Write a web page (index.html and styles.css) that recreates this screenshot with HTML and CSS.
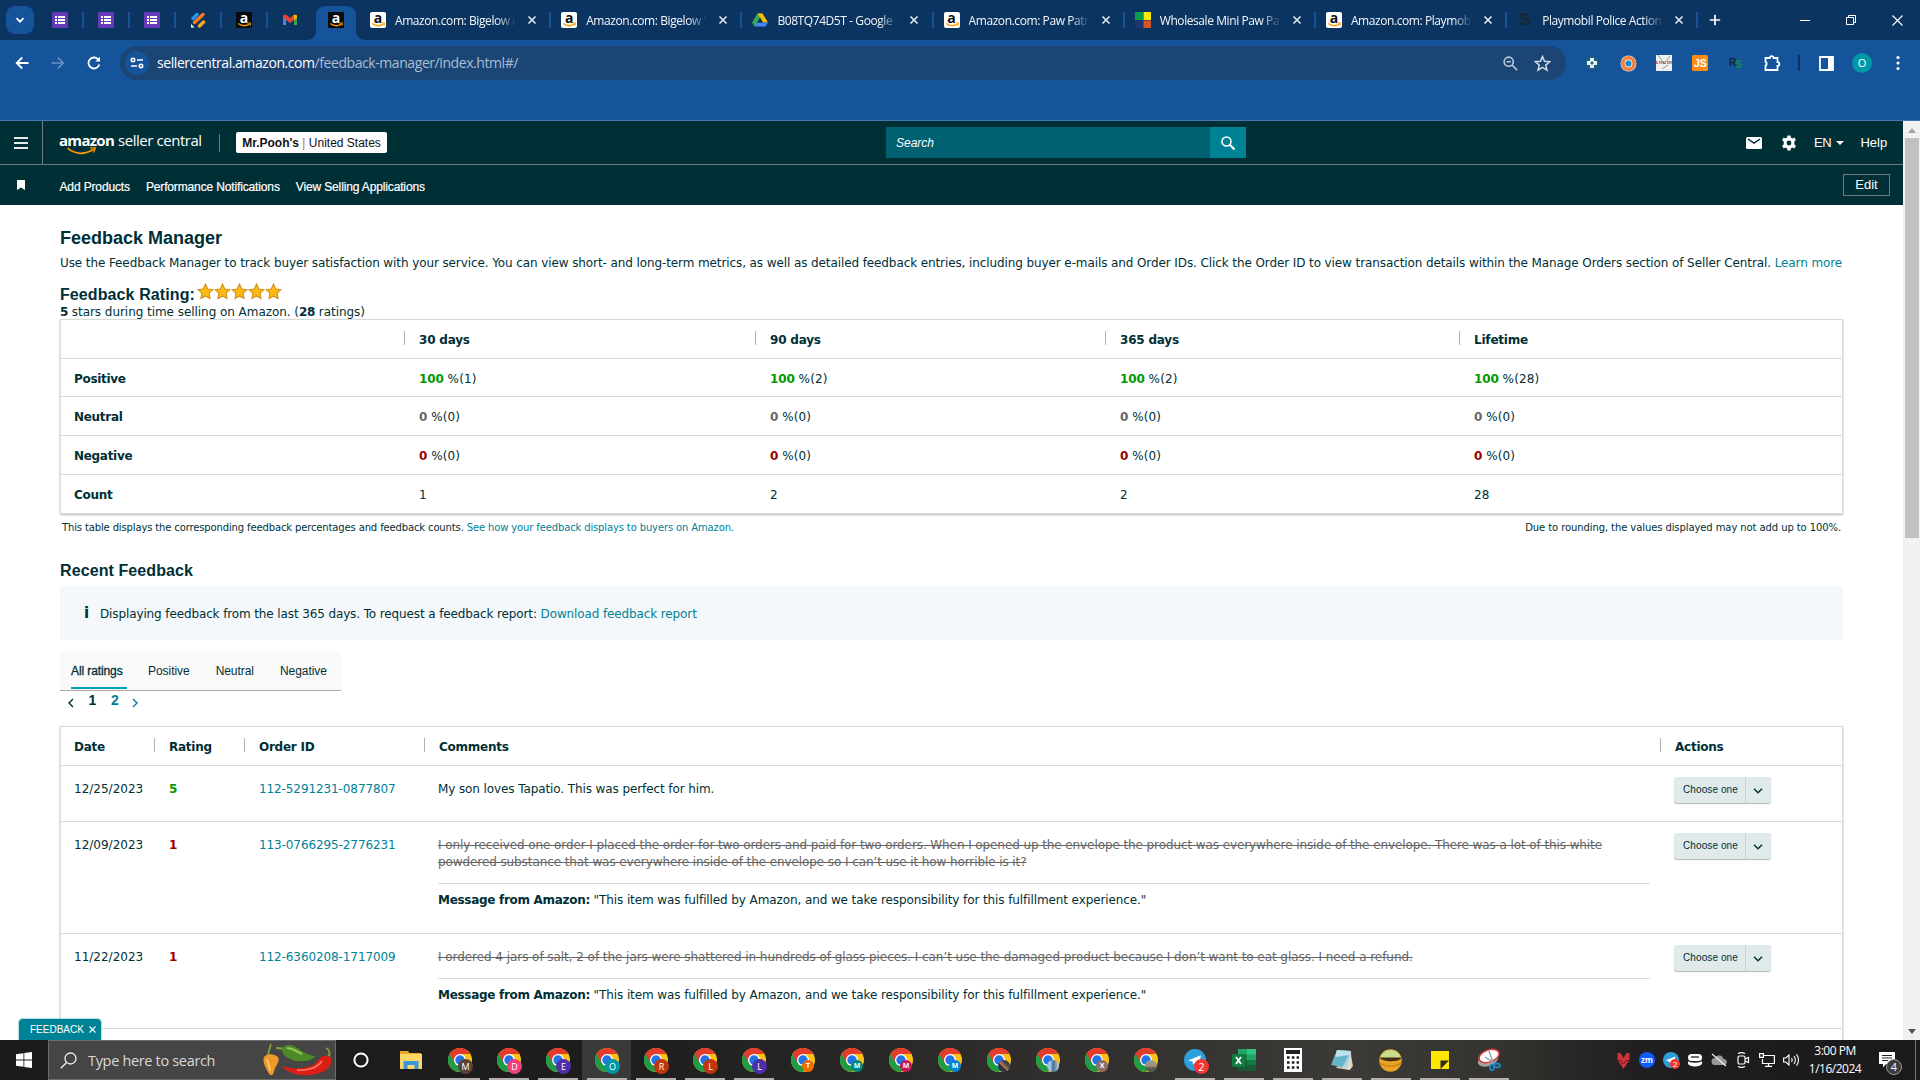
FILE: index.html
```html
<!DOCTYPE html>
<html lang="en">
<head>
<meta charset="utf-8">
<title>Feedback Manager</title>
<link rel="stylesheet" href="styles.css">
</head>
<body>
<svg width="0" height="0" class="defs" aria-hidden="true">
  <symbol id="forms" viewBox="0 0 16 16"><rect width="16" height="16" rx="1.500" fill="#673ab7"/><path d="M3 4h2v2H3zM6 4h7v2H6zM3 7h2v2H3zM6 7h7v2H6zM3 10h2v2H3zM6 10h7v2H6z" fill="#fff"/></symbol>
  <symbol id="smile" viewBox="0 0 16 16"><path d="M2.200 11.600c3.400 2.500 7.800 2.600 11.200.5" fill="none" stroke="#f90" stroke-width="1.300"/><path d="M11.300 11h3v2.600" fill="none" stroke="#f90" stroke-width="1.100"/></symbol>
  <symbol id="drive" viewBox="0 0 16 16"><path d="M5.500 1.500h5L5 11l-2.500 3.500L0 10.500z" fill="#34a853"/><path d="M5.500 1.500h5L16 10.500h-5z" fill="#fbbc04"/><path d="M4.800 10.500H16l-2.500 4h-11z" fill="#4285f4"/><path d="M8 5.800l2.700 4.700H5.300z" fill="#0c3461"/></symbol>
  <symbol id="chrome" viewBox="0 0 24 24"><circle cx="12" cy="12" r="12" fill="#fbc116"/><path d="M12 12L1.600 6A12 12 0 0 0 12 24l5.200-9z" fill="#1e9d46"/><path d="M12 12v-6h10.400A12 12 0 0 0 1.600 6l5.200 9z" fill="#e33b2e"/><circle cx="12" cy="12" r="6" fill="#fff"/><circle cx="12" cy="12" r="4.700" fill="#2573e8"/></symbol>
  <symbol id="close" viewBox="0 0 10 10"><path d="M1.500 1.500l7 7M8.500 1.500l-7 7" stroke="#e3eaf2" stroke-width="1.600"/></symbol>
  <symbol id="star" viewBox="0 0 16 16"><path d="M8 1l2.100 4.600 4.900.6-3.600 3.400.9 5L8 12.200l-4.300 2.400.9-5L1 6.200l4.900-.6z" fill="#fdbb12" stroke="#d38b1c" stroke-width="1"/></symbol>
</svg>

<div class="tabstrip">
  <div class="tab-search"><svg width="10" height="10" viewBox="0 0 10 10"><path d="M1.500 3.200L5 6.700l3.500-3.500" fill="none" stroke="#fff" stroke-width="1.700"/></svg></div>
  <div class="pins">
    <div class="pin"><svg width="16" height="16"><use href="#forms"/></svg></div>
    <div class="pin"><svg width="16" height="16"><use href="#forms"/></svg></div>
    <div class="pin"><svg width="16" height="16"><use href="#forms"/></svg></div>
    <div class="pin"><svg width="16" height="16" viewBox="0 0 16 16" fill="none" stroke-linecap="round" stroke-width="3.400"><path d="M3 6.500l4-4" stroke="#1e9bf0"/><path d="M4.500 10.500l8.500-8" stroke="#ff7a1a"/><path d="M9.500 14l4-4" stroke="#f9a825"/><path d="M1 12v3.500h3.500z" fill="#fff" stroke="none"/></svg></div>
    <div class="pin"><span class="az dark">a<svg width="16" height="16"><use href="#smile"/></svg></span></div>
    <div class="pin last"><svg width="16" height="16" viewBox="0 0 16 16"><path d="M1 4v9h3V7z" fill="#4285f4"/><path d="M15 4v9h-3V7z" fill="#34a853"/><path d="M1 3.500l3-1L8 6l4-3.500 3 1v2.200L8 11 1 5.700z" fill="#ea4335"/><path d="M12 2.500l3 1v2.200L12 8z" fill="#fbbc04"/></svg></div>
  </div>
  <div class="pin-active"><span class="az dark">a<svg width="16" height="16"><use href="#smile"/></svg></span></div>
  <div class="tabs">
    <div class="tab"><span class="az">a<svg width="16" height="16"><use href="#smile"/></svg></span><span class="tt">Amazon.com: Bigelow (</span><svg width="10" height="10"><use href="#close"/></svg></div>
    <div class="tab"><span class="az">a<svg width="16" height="16"><use href="#smile"/></svg></span><span class="tt">Amazon.com: Bigelow '</span><svg width="10" height="10"><use href="#close"/></svg></div>
    <div class="tab"><svg class="fav" width="16" height="16"><use href="#drive"/></svg><span class="tt">B08TQ74D5T - Google</span><svg width="10" height="10"><use href="#close"/></svg></div>
    <div class="tab"><span class="az">a<svg width="16" height="16"><use href="#smile"/></svg></span><span class="tt">Amazon.com: Paw Patr</span><svg width="10" height="10"><use href="#close"/></svg></div>
    <div class="tab"><svg class="fav" width="16" height="16" viewBox="0 0 16 16"><path fill="#0a9a4b" d="M0 0h8v8H0z"/><path fill="#fde80b" d="M8.500 0H16v8H8.500z"/><path fill="#20356f" d="M0 8.500h8V16H0z"/><path fill="#d4552e" d="M8.500 8.500H16V16H8.500z"/></svg><span class="tt">Wholesale Mini Paw Pa</span><svg width="10" height="10"><use href="#close"/></svg></div>
    <div class="tab"><span class="az">a<svg width="16" height="16"><use href="#smile"/></svg></span><span class="tt">Amazon.com: Playmob</span><svg width="10" height="10"><use href="#close"/></svg></div>
    <div class="tab"><span class="fav ess">S</span><span class="tt">Playmobil Police Action</span><svg width="10" height="10"><use href="#close"/></svg></div>
  </div>
  <svg class="plus" width="12" height="12" viewBox="0 0 12 12"><path d="M6 .8v10.400M.8 6h10.400" stroke="#fff" stroke-width="1.700"/></svg>
  <div class="winctl">
    <svg width="10" height="10"><path d="M0 5.500h10" stroke="#fff"/></svg>
    <svg width="10" height="10" viewBox="0 0 10 10"><path d="M.5 2.500h7v7h-7zM2.500 2.500v-2h7v7h-2" fill="none" stroke="#fff"/></svg>
    <svg width="11" height="11" viewBox="0 0 11 11"><path d="M.5.5l10 10M10.500.5l-10 10" stroke="#fff" stroke-width="1.100"/></svg>
  </div>
</div>

<div class="toolbar">
  <div class="navbtns">
    <svg width="14" height="14" viewBox="0 0 14 14" fill="none" stroke="#fff" stroke-width="1.800"><path d="M13.500 7H2M7.200 1.500L1.700 7l5.500 5.500"/></svg>
    <svg width="14" height="14" viewBox="0 0 14 14" fill="none" stroke="#6f94c4" stroke-width="1.600"><path d="M.5 7H12M6.800 1.500L12.300 7l-5.500 5.500"/></svg>
    <svg width="14" height="14" viewBox="0 0 14 14" fill="none" stroke="#fff" stroke-width="1.800"><path d="M12.300 8.500A5.500 5.500 0 1 1 11 3.200L12.500 5"/><path d="M13 .8v4.700H8.300z" fill="#fff" stroke="none"/></svg>
  </div>
  <div class="omnibox">
    <span class="site"><svg width="14" height="12" viewBox="0 0 14 12" fill="none" stroke="#fff" stroke-width="1.600"><circle cx="3" cy="3" r="1.700"/><path d="M7 3h6M1 9h6"/><circle cx="11" cy="9" r="1.700"/></svg></span>
    <span class="url">sellercentral.amazon.com<i>/feedback-manager/index.html#/</i></span>
    <span class="omni-r">
      <svg width="15" height="15" viewBox="0 0 15 15" fill="none" stroke="#bccadb" stroke-width="1.600"><circle cx="5.700" cy="5.700" r="4.600"/><path d="M9.200 9.200l5 5M3.600 5.700h4.200"/></svg>
      <svg width="17" height="17" viewBox="0 0 17 17" fill="none" stroke="#cfdae6" stroke-width="1.500"><path d="M8.500 1.500l2 4.800 5.200.4-4 3.400 1.300 5.100-4.500-2.800L4 15.200l1.300-5.100-4-3.400 5.200-.4z"/></svg>
    </span>
  </div>
  <div class="exts">
    <svg width="14" height="14" viewBox="0 0 14 14"><circle cx="7" cy="7" r="7" fill="#1b6075"/><path d="M5 2h4v3h3v4H9v3H5V9H2V5h3z" fill="#e8f2ff"/><circle cx="7" cy="7" r="1.500" fill="#1b6075"/></svg>
    <svg width="17" height="17" viewBox="0 0 17 17"><circle cx="8.500" cy="8.500" r="8" fill="#fbe4d6"/><circle cx="8.500" cy="8.500" r="5.700" fill="none" stroke="#f08040" stroke-width="3.600"/><circle cx="8.500" cy="8.500" r="3" fill="#168bd2"/></svg>
    <svg width="16" height="16" viewBox="0 0 16 16"><path fill="#eef0f2" d="M0 0h16v16H0z"/><path d="M2 0l6 9 6-8M6 14l6-4" stroke="#999" fill="none"/><text x="8" y="9" text-anchor="middle" font-size="4.500" font-weight="bold" font-family="Liberation Serif" fill="#8c2020">LOG IN</text></svg>
    <svg width="16" height="16" viewBox="0 0 16 16"><rect width="16" height="16" rx="1.500" fill="#ff8a14"/><text x="8.300" y="11.800" text-anchor="middle" font-size="10.500" font-weight="bold" font-family="Liberation Sans" fill="#fff">JS</text></svg>
    <svg width="14" height="14" viewBox="0 0 14 14" font-family="Liberation Sans" font-weight="bold" font-size="10"><text x="0" y="9.500" fill="#17233a">R</text><text x="6.500" y="11.500" fill="#168a50">S</text></svg>
    <svg width="18" height="18" viewBox="0 0 18 18" fill="none" stroke="#fff" stroke-width="1.800"><path d="M2.500 4h4.300a1.900 1.900 0 0 1 3.800 0h3.900v4.200a1.900 1.900 0 0 1 0 3.800v4h-12v-4.500a2 2 0 0 0 0-3.700z"/></svg>
    <span class="extsep"></span>
    <svg width="15" height="15" viewBox="0 0 15 15"><path d="M1 1h13v13H1z" fill="none" stroke="#fff" stroke-width="1.800"/><path d="M9 1h5v13H9z" fill="#fff"/></svg>
    <span class="avatar">O</span>
    <svg width="4" height="16" viewBox="0 0 4 16" fill="#fff"><circle cx="2" cy="2.500" r="1.600"/><circle cx="2" cy="8" r="1.600"/><circle cx="2" cy="13.500" r="1.600"/></svg>
  </div>
</div>

<div class="viewport">
  <div class="page">
    <header class="head">
      <div class="burger"><i></i><i></i><i></i></div>
      <div class="logo"><b>amazon</b><span>seller central</span><svg width="30" height="8" viewBox="0 0 30 8"><path d="M.7 1.200C8 7.600 18 8 26.500 2.300" fill="none" stroke="#f90" stroke-width="1.700"/><path d="M23 .9l5.300-.1-1.700 4.700" fill="none" stroke="#f90" stroke-width="1.300"/></svg></div>
      <div class="store"><b>Mr.Pooh's</b> <em>|</em> United States</div>
      <div class="search"><span class="q">Search</span><span class="go"><svg width="14" height="14" viewBox="0 0 14 14" fill="none" stroke="#fff" stroke-width="1.500"><circle cx="5.500" cy="5.500" r="4.500"/><path d="M8.800 8.800l4.700 4.700" stroke-width="2"/></svg></span></div>
      <div class="tools">
        <svg class="mail" width="16" height="12" viewBox="0 0 16 12"><rect width="16" height="12" rx="1.500" fill="#fff"/><path d="M2 2l6 4.200L14 2" fill="none" stroke="#002f36" stroke-width="1.500"/></svg>
        <svg class="gear" width="16" height="16" viewBox="0 0 16 16"><path d="M6.500.5h3l.4 2.100 1.500.8 2-.8 1.500 2.600-1.600 1.400v2.800l1.600 1.400-1.500 2.600-2-.8-1.500.8-.4 2.100h-3l-.4-2.100-1.500-.8-2 .8L1.100 10.800l1.600-1.400V6.600L1.100 5.200l1.500-2.600 2 .8 1.500-.8z" fill="#fff"/><circle cx="8" cy="8" r="2.400" fill="#002f36"/></svg>
        <span class="lang">EN</span><i class="caret"></i><span>Help</span>
      </div>
    </header>
    <nav class="favs">
      <svg width="8" height="10" viewBox="0 0 8 10"><path d="M0 0h8v10L4 7.500 0 10z" fill="#fff"/></svg>
      <div class="links"><a>Add Products</a><a>Performance Notifications</a><a>View Selling Applications</a></div>
      <span class="edit">Edit</span>
    </nav>

    <main>
      <h1>Feedback Manager</h1>
      <p class="intro">Use the Feedback Manager to track buyer satisfaction with your service. You can view short- and long-term metrics, as well as detailed feedback entries, including buyer e-mails and Order IDs. Click the Order ID to view transaction details within the Manage Orders section of Seller Central. <a>Learn more</a></p>
      <h2 class="rating"><span>Feedback Rating:</span><span class="stars"><svg width="17" height="17"><use href="#star"/></svg><svg width="17" height="17"><use href="#star"/></svg><svg width="17" height="17"><use href="#star"/></svg><svg width="17" height="17"><use href="#star"/></svg><svg width="17" height="17"><use href="#star"/></svg></span></h2>
      <p class="summary"><b>5</b> stars during time selling on Amazon. (<b>28</b> ratings)</p>

      <section class="card metrics">
        <div class="row th"><span></span><span>30 days</span><span>90 days</span><span>365 days</span><span>Lifetime</span></div>
        <div class="row pos"><b>Positive</b><span><b>100</b> %(1)</span><span><b>100</b> %(2)</span><span><b>100</b> %(2)</span><span><b>100</b> %(28)</span></div>
        <div class="row neu"><b>Neutral</b><span><b>0</b> %(0)</span><span><b>0</b> %(0)</span><span><b>0</b> %(0)</span><span><b>0</b> %(0)</span></div>
        <div class="row neg"><b>Negative</b><span><b>0</b> %(0)</span><span><b>0</b> %(0)</span><span><b>0</b> %(0)</span><span><b>0</b> %(0)</span></div>
        <div class="row cnt"><b>Count</b><span>1</span><span>2</span><span>2</span><span>28</span></div>
      </section>
      <div class="foot"><span>This table displays the corresponding feedback percentages and feedback counts. <a>See how your feedback displays to buyers on Amazon.</a></span><span class="rounding">Due to rounding, the values displayed may not add up to 100%.</span></div>

      <h2 class="recent">Recent Feedback</h2>
      <div class="info"><b>i</b><span>Displaying feedback from the last 365 days. To request a feedback report: <a>Download feedback report</a></span></div>
      <div class="filters"><span class="on">All ratings</span><span>Positive</span><span>Neutral</span><span>Negative</span></div>
      <div class="pager"><svg width="6" height="10" viewBox="0 0 6 10"><path d="M5 1L1 5l4 4" fill="none" stroke="#002f36" stroke-width="1.400"/></svg><b>1</b><b class="lk">2</b><svg width="6" height="10" viewBox="0 0 6 10"><path d="M1 1l4 4-4 4" fill="none" stroke="#008296" stroke-width="1.400"/></svg></div>

      <section class="card list">
        <div class="row th"><span>Date</span><span>Rating</span><span>Order ID</span><span>Comments</span><span>Actions</span></div>
        <div class="row r1"><span class="date">12/25/2023</span><span class="good">5</span><span><a>112-5291231-0877807</a></span><div><p>My son loves Tapatio. This was perfect for him.</p></div><span class="choose"><span>Choose one</span><i><svg width="10" height="6" viewBox="0 0 10 6"><path d="M1 .8l4 4 4-4" fill="none" stroke="#002f36" stroke-width="1.500"/></svg></i></span></div>
        <div class="row r2"><span class="date">12/09/2023</span><span class="bad">1</span><span><a>113-0766295-2776231</a></span><div><p><s>I only received one order I placed the order for two orders and paid for two orders. When I opened up the envelope the product was everywhere inside of the envelope. There was a lot of this white<br>powdered substance that was everywhere inside of the envelope so I can’t use it how horrible is it?</s></p><hr><p><b>Message from Amazon:</b> "This item was fulfilled by Amazon, and we take responsibility for this fulfillment experience."</p></div><span class="choose"><span>Choose one</span><i><svg width="10" height="6" viewBox="0 0 10 6"><path d="M1 .8l4 4 4-4" fill="none" stroke="#002f36" stroke-width="1.500"/></svg></i></span></div>
        <div class="row r3"><span class="date">11/22/2023</span><span class="bad">1</span><span><a>112-6360208-1717009</a></span><div><p><s>I ordered 4 jars of salt, 2 of the jars were shattered in hundreds of glass pieces. I can’t use the damaged product because I don’t want to eat glass. I need a refund.</s></p><hr><p><b>Message from Amazon:</b> "This item was fulfilled by Amazon, and we take responsibility for this fulfillment experience."</p></div><span class="choose"><span>Choose one</span><i><svg width="10" height="6" viewBox="0 0 10 6"><path d="M1 .8l4 4 4-4" fill="none" stroke="#002f36" stroke-width="1.500"/></svg></i></span></div>
        <div class="row r4"></div>
      </section>
    </main>
    <div class="fbtab">FEEDBACK<svg width="7" height="7" viewBox="0 0 7 7"><path d="M.5.5l6 6M6.500.5l-6 6" stroke="#fff" stroke-width="1.100"/></svg></div>
  </div>
  <div class="scroll"><i class="up"></i><div class="thumb"></div><i class="down"></i></div>
</div>

<div class="taskbar">
  <div class="start"><svg width="16" height="16" viewBox="0 0 16 16" fill="#fff"><path d="M0 2.200L7.500 1.200v6.400H0zM8.300 1.100L16 0v7.600H8.300zM0 8.400h7.500v6.400L0 13.800zM8.300 8.400H16V16l-7.700-1.100z"/></svg></div>
  <div class="tsearch">
    <svg width="17" height="17" viewBox="0 0 17 17" fill="none" stroke="#f0f0f0" stroke-width="1.300"><circle cx="10.500" cy="6.500" r="5.500"/><path d="M6.500 10.500L.8 16.200"/></svg>
    <span>Type here to search</span>
    <svg class="peppers" width="72" height="34" viewBox="0 0 72 34"><path d="M6 12c1-5 2-8 3-11M14 5c5 0 7 0 9 2M66 14c3-3 1-8-2-9" stroke="#7fa238" stroke-width="1.800" fill="none"/><path d="M1.500 15c2-5 12-5 15 0 1 5-3 7-5 15-1 3-3 3-5 0C4 25 1 21 1.500 15z" fill="#f0992a"/><path d="M5 16c1 4 3 8 3 12" stroke="#ffc66b" stroke-width="2" fill="none"/><path d="M20 5c4-4 10-4 17 1 5 4 12 7 17 7-5 5-13 6-20 5-8-2-15-6-14-13z" fill="#4c8a28"/><path d="M25 5c6 0 10 4 15 6" stroke="#9cc95c" stroke-width="2" fill="none"/><path d="M58 15c3-3 9-3 11 0 2 8-5 14-15 16-12 3-26 1-35-8 10 3 19 3 26 1 7-1 10-5 13-9z" fill="#dc1f16"/><path d="M35 27c10 1 20-2 25-9" stroke="#ff7c60" stroke-width="1.600" fill="none"/></svg>
  </div>
  <div class="apps">
    <div class="app"><svg width="16" height="16" viewBox="0 0 16 16"><circle cx="8" cy="8" r="6.600" fill="none" stroke="#fff" stroke-width="2"/></svg></div>
    <div class="app"><svg width="22" height="18" viewBox="0 0 22 18"><path d="M0 0h8l1.500 2H21v16H0z" fill="#e8a82b"/><path d="M0 3h22v15H0z" fill="#fcd667"/><path d="M3.500 18v-8h15v8h-4v-4h-7v4z" fill="#3b97db"/></svg></div>
    <div class="app run"><svg width="24" height="24"><use href="#chrome"/></svg><i class="bdg brown">M</i></div>
    <div class="app run"><svg width="24" height="24"><use href="#chrome"/></svg><i class="bdg pink">D</i></div>
    <div class="app run"><svg width="24" height="24"><use href="#chrome"/></svg><i class="bdg purple">E</i></div>
    <div class="app run cur"><svg width="24" height="24"><use href="#chrome"/></svg><i class="bdg teal">O</i></div>
    <div class="app run"><svg width="24" height="24"><use href="#chrome"/></svg><i class="bdg rust">R</i></div>
    <div class="app run"><svg width="24" height="24"><use href="#chrome"/></svg><i class="bdg rust">L</i></div>
    <div class="app run"><svg width="24" height="24"><use href="#chrome"/></svg><i class="bdg purple">L</i></div>
    <div class="app"><svg width="24" height="24"><use href="#chrome"/></svg><i class="bdg sm orange">T</i></div>
    <div class="app"><svg width="24" height="24"><use href="#chrome"/></svg><i class="bdg sm green">M</i></div>
    <div class="app"><svg width="24" height="24"><use href="#chrome"/></svg><i class="bdg sm magenta">M</i></div>
    <div class="app"><svg width="24" height="24"><use href="#chrome"/></svg><i class="bdg sm blue">M</i></div>
    <div class="app"><svg width="24" height="24"><use href="#chrome"/></svg><i class="bdg sm pic1"></i></div>
    <div class="app"><svg width="24" height="24"><use href="#chrome"/></svg><i class="bdg sm pic2"></i></div>
    <div class="app"><svg width="24" height="24"><use href="#chrome"/></svg><i class="bdg sm tan">X</i></div>
    <div class="app"><svg width="24" height="24"><use href="#chrome"/></svg><i class="bdg sm pic3"></i></div>
    <div class="app run"><svg width="22" height="22" viewBox="0 0 22 22"><circle cx="11" cy="11" r="11" fill="#2ba0dc"/><path d="M4 11.500l13-5.200-2.400 10.200-3.600-2.700-2 1.900-.4-3.200z" fill="#fff"/></svg><i class="bdg red">2</i></div>
    <div class="app run"><svg width="24" height="22" viewBox="0 0 24 22"><path fill="#21a366" d="M6 0h18v11H6z"/><path fill="#33c481" d="M15 0h9v5.500h-9z"/><path fill="#107c41" d="M6 5.500h9V11H6zM15 11h9v5.500h-9z"/><path fill="#185c37" d="M6 11h9v5h9v6H6z"/><rect y="5" width="13" height="13" rx="1" fill="#107c41"/><path d="M4 8l5 7M9 8l-5 7" stroke="#fff" stroke-width="1.800"/></svg></div>
    <div class="app run"><svg width="18" height="24" viewBox="0 0 18 24"><path d="M0 0h18v24H0z" fill="#fff"/><path d="M2 2h14v4H2z" fill="#222"/><path d="M3 9.500h12M3 14.500h12M3 19.500h12" stroke="#222" stroke-width="2.400" stroke-dasharray="2.600 2.200"/></svg></div>
    <div class="app run"><svg width="24" height="24" viewBox="0 0 24 24"><path d="M20 3l3 15-3 4-14-2z" fill="#c9c4ae"/><path d="M7 2l14 1-4 17L1 17z" fill="#63b4c8"/><path d="M7 2l14 1-1 4L5 9z" fill="#bfe3ea"/><path d="M12 20L21 3l1 15-3 4z" fill="#e7e9e6" opacity=".6"/></svg></div>
    <div class="app run"><svg width="23" height="23" viewBox="0 0 23 23"><circle cx="11.500" cy="11.500" r="11.200" fill="#e9a325"/><path d="M.5 10a11.200 11.200 0 0 1 22 0z" fill="#c9dc8c"/><path d="M.8 8.500h21.400c1 5-20 5-21.400 0z" fill="#4a2c10"/><path d="M1 14c5 4 16 4 21 0" stroke="#c98412" fill="none" stroke-width="1.500"/></svg></div>
    <div class="app run"><svg width="18" height="18" viewBox="0 0 18 18"><path d="M0 0h18v18H0z" fill="#ffe600"/><path d="M9.500 9.500H18L9.500 18z" fill="#2b2a26"/></svg></div>
    <div class="app run"><svg width="24" height="24" viewBox="0 0 24 24"><ellipse cx="11" cy="12" rx="10.500" ry="6" fill="#a3a3a3" transform="rotate(-20 11 12)"/><ellipse cx="12" cy="8" rx="10.500" ry="6" fill="#fff" stroke="#d9383a" stroke-width="1.500" transform="rotate(-20 12 8)"/><path d="M12 3l5 14M8 9l11 7" stroke="#8c9aa5" stroke-width="1.300"/><g fill="none" stroke="#1f86c8" stroke-width="1.800"><ellipse cx="15" cy="19.500" rx="2" ry="2.800"/><ellipse cx="20" cy="17.500" rx="3" ry="2"/></g></svg></div>
  </div>
  <div class="tray">
    <div class="icons">
      <svg width="13" height="17" viewBox="0 0 13 17"><path d="M.5 1h3l3 5 3-5h3v7l-6 9-6-9z" fill="#cf3238"/><path d="M1 8.500h2.500l3 3.500 3-3.500H12" fill="none" stroke="#5d1a20" stroke-width="1"/></svg>
      <span class="zm">zm</span>
      <span class="tg"><svg width="16" height="16" viewBox="0 0 22 22"><circle cx="11" cy="11" r="11" fill="#2ba0dc"/><path d="M4 11.500l13-5.200-2.400 10.200z" fill="#fff"/></svg><i>2</i></span>
      <svg width="14" height="13" viewBox="0 0 14 13"><rect y="0" width="14" height="7" rx="3.500" fill="#fff"/><path d="M3 3h8" stroke="#222" stroke-width="1.300"/><path d="M0 7c1 2.300 13 2.300 14 0v2.500c-1 4-13 4-14 0z" fill="#fff"/></svg>
      <svg width="16" height="14" viewBox="0 0 16 14"><path d="M4 12a3.500 3.500 0 0 1 0-7 4.500 4.500 0 0 1 8.500 1A3 3 0 0 1 13 12z" fill="#999"/><path d="M1 1l14 12" stroke="#eee" stroke-width="1.300"/></svg>
      <svg width="14" height="16" viewBox="0 0 14 16" fill="none" stroke="#fff" stroke-width="1.200"><rect x="2" y="4" width="7" height="8" rx="1.500"/><path d="M9 7l3.500-1.500v5L9 9M2 1.500c2-1 5-1 7 0M2 14.500c2 1 5 1 7 0"/></svg>
      <svg width="16" height="14" viewBox="0 0 16 14" fill="none" stroke="#fff" stroke-width="1.200"><path d="M5 2.500h10.400v8H3.500V6M9.500 10.500v3M6 13.400h7M.6.600h3.800v3.800H.6z"/></svg>
      <svg width="17" height="14" viewBox="0 0 17 14" fill="none" stroke="#fff" stroke-width="1.100"><path d="M.6 5h2.200L6 2v10L2.800 9H.6zM8.500 5c.8 1.200.8 2.800 0 4M11 3c1.600 2.400 1.600 5.600 0 8M13.500 1.200c2.500 3.600 2.500 8 0 11.600"/></svg>
    </div>
    <div class="clock"><span>3:00 PM</span><span>1/16/2024</span></div>
    <div class="note"><svg width="16" height="16" viewBox="0 0 16 16"><path d="M0 0h16v12H7l-3 3.500V12H0z" fill="#fff"/><path d="M3 3.500h10M3 6h10M3 8.500h6" stroke="#222"/></svg><i>4</i></div>
  </div>
</div>
</body>
</html>
```
FILE: styles.css
```css
* { box-sizing: border-box; }
body { margin: 0; width: 1920px; height: 1080px; overflow: hidden; display: flex; flex-direction: column; background: #fff; color: #002f36; font: 12px "DejaVu Sans", sans-serif; }
svg { display: block; flex: none; }
p, h1, h2 { margin: 0; }
i, em { font-style: normal; }
.defs { position: absolute; }

/* browser tab strip */
.tabstrip { flex: none; height: 40px; background: #0c3461; display: flex; align-items: center; padding-left: 6px; font: 12px/16px "Open Sans", sans-serif; color: #f2f6fa; }
.tab-search { width: 28px; height: 28px; border-radius: 9px; background: #15539a; display: flex; align-items: center; justify-content: center; }
.pins { display: flex; margin-left: 3px; }
.pin { width: 46px; display: flex; justify-content: center; height: 16px; position: relative; }
.pin::after { content: ""; position: absolute; right: -1px; width: 2px; height: 16px; background: #15539a; }
.pin.last::after { display: none; }
.pin-active { width: 40px; height: 34px; align-self: flex-end; margin-left: 3px; border-radius: 9px 9px 0 0; background: #15539a; display: flex; align-items: center; justify-content: center; padding-bottom: 6px; position: relative; }
.pin-active::before, .pin-active::after { content: ""; position: absolute; bottom: 0; width: 8px; height: 8px; }
.pin-active::before { left: -8px; background: radial-gradient(circle at 0 0, transparent 7.500px, #15539a 8px); }
.pin-active::after { right: -8px; background: radial-gradient(circle at 100% 0, transparent 7.500px, #15539a 8px); }
.az { position: relative; width: 16px; height: 16px; border-radius: 2px; background: #fff; color: #111; font: bold 14px/12px "Open Sans", sans-serif; text-align: center; flex: none; }
.az svg { position: absolute; left: 0; top: 0; }
.az.dark { background: #0a0a0a; color: #fff; border-radius: 0; }
.tabs { display: flex; margin-left: 4px; }
.tab { width: 191.200px; height: 16px; display: flex; align-items: center; padding-left: 10px; border-right: 2px solid #15539a; }
.tt { margin-left: 9px; width: 119px; white-space: nowrap; overflow: hidden; line-height: 18px; padding-top: 1px; letter-spacing: -.42px; -webkit-mask-image: linear-gradient(90deg, #000 102px, transparent 121px); mask-image: linear-gradient(90deg, #000 102px, transparent 121px); }
.tab > svg:last-child { margin-left: 13px; }
.ess { width: 16px; font: bold 17px/16px "Liberation Sans", sans-serif; color: #1b2430; text-align: center; }
.plus { margin-left: 11px; }
.winctl { margin-left: auto; padding-right: 17px; display: flex; gap: 36px; align-items: center; }

/* browser toolbar */
.toolbar { flex: none; height: 81px; background: #15539a; border-bottom: 1px solid #4478b0; display: flex; align-items: flex-start; padding-top: 6px; }
.navbtns { display: flex; gap: 22px; padding: 10px 0 0 15px; width: 120px; }
.omnibox { width: 1446px; height: 34px; border-radius: 17px; background: #1a4574; display: flex; align-items: center; padding-left: 5px; }
.site { width: 24px; height: 24px; border-radius: 12px; background: #15539a; display: flex; align-items: center; justify-content: center; }
.url { margin-left: 8px; font: 14px/20px "Open Sans", sans-serif; letter-spacing: -.43px; color: #fff; white-space: nowrap; }
.url i { color: #a9bdd4; }
.omni-r { margin-left: auto; padding-right: 15px; display: flex; gap: 16px; align-items: center; }
.exts { display: grid; grid-template-columns: repeat(6, 36px) 18px repeat(3, 36px); margin-left: 8px; height: 34px; align-items: center; justify-items: center; }
.extsep { width: 2px; height: 16px; background: #0c3461; }
.avatar { width: 20px; height: 20px; border-radius: 10px; background: #0097a7; color: #fff; font: 11px/20px "Open Sans", sans-serif; text-align: center; }

/* page frame */
.viewport { flex: none; height: 919px; display: flex; }
.page { width: 1903px; height: 919px; overflow: hidden; position: relative; }
.scroll { width: 17px; background: #f1f1f1; display: flex; flex-direction: column; align-items: center; }
.up, .down { border: 4px solid transparent; width: 0; height: 0; }
.up { border-bottom: 5px solid #a3a3a3; border-top: 0; margin-top: 7px; }
.down { border-top: 5px solid #505050; border-bottom: 0; margin: auto 0 6px; }
.thumb { width: 14px; height: 400px; background: #c1c1c1; margin-top: 5px; }

/* seller central header */
.head { height: 44px; background: #002f36; border-bottom: 1px solid #6b7b7e; display: flex; align-items: center; color: #fff; font: 13px/18px "Liberation Sans", sans-serif; }
.burger { width: 43px; height: 43px; border-right: 1px solid #6b7b7e; display: flex; flex-direction: column; gap: 3px; justify-content: center; padding-left: 14px; }
.burger i { width: 14px; height: 2px; background: #e6eaea; }
.logo { position: relative; width: 177px; height: 18px; padding-left: 16px; border-right: 1px solid #6b7b7e; font: 15px/16px "Open Sans", sans-serif; white-space: nowrap; display: flex; gap: 4px; }
.logo > * { display: block; margin-top: -2px; }
.logo b { letter-spacing: -.7px; width: 55px; }
.logo span { letter-spacing: -.45px; }
.logo svg { position: absolute; left: 24px; top: 13px; margin: 0; }
.store { width: 151px; height: 21px; margin-left: 16px; background: #fff; border-radius: 2px; color: #111; font-size: 12px; line-height: 22px; text-align: center; white-space: nowrap; }
.store em { color: #b5742a; }
.search { margin-left: 499px; width: 360px; height: 31px; display: flex; }
.q { width: 324px; background: #006170; padding-left: 10px; font-style: italic; font-size: 12px; line-height: 32px; }
.go { width: 36px; background: #008296; display: flex; align-items: center; justify-content: center; }
.tools { margin-left: 500px; display: flex; align-items: center; }
.gear { margin-left: 19px; }
.lang { margin-left: 17px; letter-spacing: -.3px; }
.caret { border: 4px solid transparent; border-top-color: #fff; border-bottom: 0; margin: 1px 16px 0 5px; }
.favs { height: 40px; background: #002f36; display: flex; align-items: center; padding-left: 17px; color: #fff; font: 12px/16px "Liberation Sans", sans-serif; }
.links { display: flex; gap: 16px; margin: 4px 0 0 34.500px; white-space: nowrap; letter-spacing: -.14px; -webkit-text-stroke: .2px #fff; }
.edit { margin: 0 13px 0 auto; width: 47px; height: 22px; border: 1px solid #6b7b7e; text-align: center; line-height: 20px; font-size: 13px; }

/* feedback manager */
main { padding: 21px 0 0 60px; width: 1843px; letter-spacing: -.1px; }
main a { color: #008296; }
main b { letter-spacing: -.3px; }
h1 { font: bold 18px/24px "Liberation Sans", sans-serif; letter-spacing: 0; }
h2 { font: bold 16px/20px "Liberation Sans", sans-serif; letter-spacing: .1px; }
.intro { margin-top: 4px; line-height: 18px; white-space: nowrap; }
.rating { margin-top: 12px; display: flex; }
.rating > span:first-child { padding-top: 1px; height: 20px; }
.stars { display: flex; margin: -1px 0 0 2px; }
.summary { height: 15px; line-height: 17px; letter-spacing: -.05px; }
.card { border: 1px solid #d5dbdb; box-shadow: 0 1px 2px #bbb; }
.row { display: grid; border-bottom: 1px solid #d5dbdb; }
.metrics .row { grid-template-columns: 343px 351px 350px 354px 1fr; height: 39px; line-height: 40px; letter-spacing: .15px; }
.metrics .row.th { letter-spacing: -.2px; }
.metrics .row.pos { height: 38px; }
.metrics .row:last-child { height: 38px; border: 0; }
.metrics span b { letter-spacing: -.15px; }
.row > * { padding-left: 15px; }
.row > :first-child { padding-left: 13px; }
.th { font-weight: bold; letter-spacing: -.25px; }
.th > span { position: relative; }
.th > span + span::before { content: ""; position: absolute; left: 0; top: 11px; width: 1px; height: 14px; background: #aab7b8; }
.pos span b { color: #090; }
.neu span b { color: #666; }
.neg span b { color: #900; }
.foot { margin-top: 7px; padding: 0 2px; display: flex; justify-content: space-between; font-size: 10px; line-height: 14px; letter-spacing: -.135px; white-space: nowrap; }
.rounding { letter-spacing: -.09px; }
.recent { margin-top: 26px; }
.info { margin-top: 5px; height: 54px; background: #f4f8fa; display: flex; align-items: center; white-space: nowrap; letter-spacing: -.12px; }
.info span { padding-top: 2px; }
.info b { width: 40px; padding-left: 24px; font-size: 15px; }
.filters { margin-top: 12px; width: 281px; height: 39px; background: #fafafa; border-bottom: 1px solid #aaa; display: flex; padding-left: 11px; font: 12px/38px "Liberation Sans", sans-serif; letter-spacing: -.05px; white-space: nowrap; }
.filters > span { flex: none; margin-right: 26px; }
.filters .on { width: 56px; margin-right: 21px; height: 37px; border-bottom: 2px solid #00a1b8; -webkit-text-stroke: .3px #002f36; letter-spacing: -.1px; }
.pager { height: 35px; display: flex; padding: 0 0 0 8px; font: bold 14px/18px "Liberation Sans", sans-serif; }
.pager svg { margin-top: 7px; }
.pager b { margin-left: 14.500px; width: 8px; }
.pager svg:last-child { margin-left: 13px; }
.lk { color: #008296; }
.list .row { grid-template-columns: 93px 90px 180px 1236px 1fr; line-height: 17px; }
.list .row > * { padding-top: 15px; }
.list .row.th { height: 39px; line-height: 40px; }
.list .row.th > * { padding-top: 0; }
.list .r1 { height: 56px; }
.list .r2 { height: 112px; }
.list .r3 { height: 95px; }
.list .r4 { height: 40px; }
.list .row > div { padding-right: 10px; padding-left: 14px; white-space: nowrap; }
.list .date { letter-spacing: 0; }
.list s { color: #666; }
.r2 s { letter-spacing: -.093px; }
.r3 s { letter-spacing: -.055px; }
hr { border: 0; height: 1px; background: #d5dbdb; margin: 12px 0 8px; }
.good { color: #090; font-weight: bold; }
.bad { color: #900; font-weight: bold; }
.list .row > .choose { margin: 11px 0 0 14px; padding: 0; width: 97px; height: 26px; display: flex; background: #e1eaeb; border-radius: 3px; box-shadow: 0 1px 1px #aab7b8; font: 10px/25px "Liberation Sans", sans-serif; }
.choose > span { width: 72px; padding-left: 9px; border-right: 1px solid #c8d2d3; letter-spacing: .1px; }
.choose i { flex: 1; display: flex; align-items: center; justify-content: center; padding: 1px 1px 0 0; }
.fbtab { position: absolute; left: 18px; bottom: 0; width: 84px; height: 22px; background: #008296; border: 1px solid #b9dce0; border-bottom: 0; border-radius: 5px 5px 0 0; display: flex; align-items: center; gap: 5px; padding-left: 11px; color: #fff; font: 10px/20px "Liberation Sans", sans-serif; }

/* windows taskbar */
.taskbar { flex: none; height: 40px; background: linear-gradient(90deg, #1c1b1d 0, #1e1d1e 600px, #2a2928 900px, #3c3a37 1350px, #35332f 1500px, #201e1f 1640px, #1a191b); display: flex; color: #fff; font: 12px/18px "Open Sans", sans-serif; }
.start { width: 48px; display: flex; align-items: center; justify-content: center; }
.tsearch { width: 288px; border: 1px solid #6c6c6c; background: #454545; display: flex; align-items: center; padding-left: 11px; font-size: 14.500px; letter-spacing: -.33px; color: #d8d8d8; white-space: nowrap; }
.tsearch span { margin-left: 11px; width: 174px; padding-top: 2px; }
.apps { display: flex; margin-left: 1px; }
.app { width: 49px; height: 40px; display: flex; align-items: center; justify-content: center; position: relative; }
.app:first-child { padding-right: 2px; }
.run::after { content: ""; position: absolute; left: 5px; bottom: 0; width: 40px; height: 2px; background: #b3b0ad; }
.cur { background: #3a3a3b; }
.bdg { position: absolute; left: 23px; top: 19px; width: 15px; height: 15px; border-radius: 8px; text-align: center; font: 9px/15px "Open Sans", sans-serif; }
.bdg.sm { left: 24px; top: 20px; width: 12px; height: 12px; font: bold 7px/12px "Open Sans", sans-serif; }
.brown { background: #5d4037; }
.pink { background: #ec407a; }
.purple { background: #512da8; }
.teal { background: #0097a7; }
.rust { background: #bf360c; }
.orange { background: #ef6c00; }
.green { background: #00897b; }
.magenta { background: #c2185b; }
.blue { background: #0288d1; }
.tan { background: #8d6e63; }
.pic1 { background: linear-gradient(45deg, #2a3550 40%, #c47a3a 45%, #3a4055 70%); }
.pic2 { background: linear-gradient(90deg, #9cc4e6 30%, #4a6a8c 50%, #b9d4e8); }
.pic3 { background: linear-gradient(0deg, #4f5b4c 30%, #a08c78 50%, #88a8a0); }
.bdg.red { background: #f4372e; left: 24px; font-size: 11px; }
.tray { margin-left: auto; display: flex; align-items: center; border-right: 1px solid #777; margin-right: 4px; }
.icons { display: grid; grid-template-columns: repeat(8, 24px); align-items: center; justify-items: center; }
.zm { width: 16px; height: 16px; border-radius: 8px; background: #0b5cff; font: bold 8px/15px "Open Sans", sans-serif; text-align: center; }
.tg { position: relative; }
.tg i { position: absolute; right: -1px; bottom: -1px; width: 10px; height: 10px; border-radius: 5px; background: #f4372e; font: 8px/10px "Open Sans", sans-serif; text-align: center; }
.clock { display: flex; flex-direction: column; width: 64px; align-items: center; letter-spacing: -.5px; }
.note { position: relative; width: 48px; height: 40px; padding: 12px 0 0 12px; }
.note i { position: absolute; left: 19px; top: 19px; width: 16px; height: 16px; border-radius: 8px; background: #3b3b3d; border: 1px solid #999; font: 11px/14px "Open Sans", sans-serif; text-align: center; }
```
